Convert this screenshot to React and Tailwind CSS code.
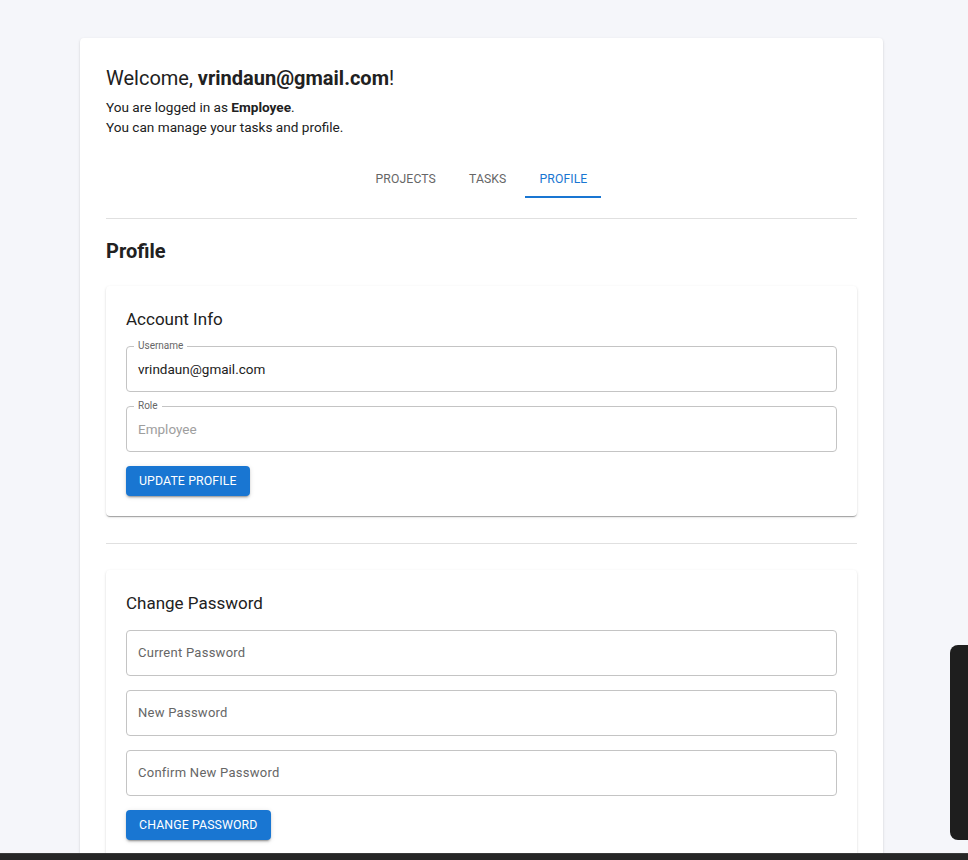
import React from 'react';

const paperShadow =
  'shadow-[0px_2px_1px_-1px_rgba(0,0,0,0.2),0px_1px_1px_0px_rgba(0,0,0,0.14),0px_1px_3px_0px_rgba(0,0,0,0.12)]';

// Outlined text field (MUI look)
const Field = ({ label, value, disabled, placeholderOnly }) => {
  if (placeholderOnly) {
    return (
      <div className="h-[46px] rounded-[4px] border border-[#c4c4c4] flex items-center px-[11px]">
        <span className="text-[13px] text-[#666666] tracking-[0.02em]">{label}</span>
      </div>
    );
  }
  return (
    <div className="relative h-[46px] rounded-[4px] border border-[#c4c4c4] flex items-center px-[11px]">
      <span className="absolute -top-[8px] left-[7px] bg-white px-[4px] text-[10px] leading-[14px] text-[#666666]">
        {label}
      </span>
      <span className={`text-[13.5px] ${disabled ? 'text-[#9e9e9e]' : 'text-[#212121]'}`}>{value}</span>
    </div>
  );
};

const Button = ({ children }) => (
  <button
    className="self-start h-[30px] px-[13px] rounded-[4px] bg-[#1976d2] text-white text-[12.3px] font-normal uppercase tracking-[0.01em] shadow-[0px_3px_1px_-2px_rgba(0,0,0,0.2),0px_2px_2px_0px_rgba(0,0,0,0.14),0px_1px_5px_0px_rgba(0,0,0,0.12)]"
  >
    {children}
  </button>
);

const Tabs = ({ items, active }) => (
  <div className="flex justify-center gap-[5px] mt-[19px]">
    {items.map((t) => (
      <div
        key={t}
        className={`h-[42px] px-[14px] pt-[6px] flex items-center text-[12.2px] uppercase tracking-[0.01em] border-b-2 ${
          t === active ? 'text-[#1976d2] border-[#1976d2]' : 'text-[#666666] border-transparent'
        }`}
      >
        {t}
      </div>
    ))}
  </div>
);

export default function App() {
  return (
    <div className="min-h-screen bg-[#f5f6fa] pt-[38px] pb-[40px]" style={{ fontFamily: 'Roboto, "Liberation Sans", sans-serif' }}>
      <div className={`ml-[80px] w-[803px] bg-white rounded-[4px] ${paperShadow} px-[26px] pt-[27px] pb-[60px]`}>
        <h1 className="text-[20px] leading-[26px] text-[#212121]">
          Welcome, <span className="font-bold">vrindaun@gmail.com</span>!
        </h1>
        <p className="mt-[6px] text-[13.6px] leading-[20px] text-[#212121]">
          You are logged in as <span className="font-bold">Employee</span>.
        </p>
        <p className="text-[13.6px] leading-[20px] text-[#212121]">You can manage your tasks and profile.</p>

        <Tabs items={['Projects', 'Tasks', 'Profile']} active="Profile" />

        <div className="mt-[20px] h-px bg-[#e0e0e0]" />

        <h2 className="mt-[19px] text-[20px] leading-[27px] font-bold text-[#212121]">Profile</h2>

        <div className={`mt-[21px] rounded-[4px] bg-white ${paperShadow} p-[20px] flex flex-col`}>
          <h3 className="text-[17px] leading-[27px] text-[#212121]">Account Info</h3>
          <div className="mt-[13px] flex flex-col gap-[14px]">
            <Field label="Username" value="vrindaun@gmail.com" />
            <Field label="Role" value="Employee" disabled />
            <Button>Update Profile</Button>
          </div>
        </div>

        <div className="mt-[27px] h-px bg-[#e0e0e0]" />

        <div className={`mt-[26px] rounded-[4px] bg-white ${paperShadow} p-[20px] flex flex-col`}>
          <h3 className="text-[17px] leading-[27px] text-[#212121]">Change Password</h3>
          <div className="mt-[13px] flex flex-col gap-[14px]">
            <Field label="Current Password" placeholderOnly />
            <Field label="New Password" placeholderOnly />
            <Field label="Confirm New Password" placeholderOnly />
            <Button>Change Password</Button>
          </div>
        </div>
      </div>

      {/* overlay panel at right edge */}
      <div className="fixed right-0 top-[645px] w-[18px] h-[195px] bg-[#1e1e1e] rounded-l-[8px]" />
      {/* bottom bar */}
      <div className="fixed left-0 right-0 bottom-0 h-[7px] bg-[#262626] border-t border-[#3a3a3a]" />
    </div>
  );
}
